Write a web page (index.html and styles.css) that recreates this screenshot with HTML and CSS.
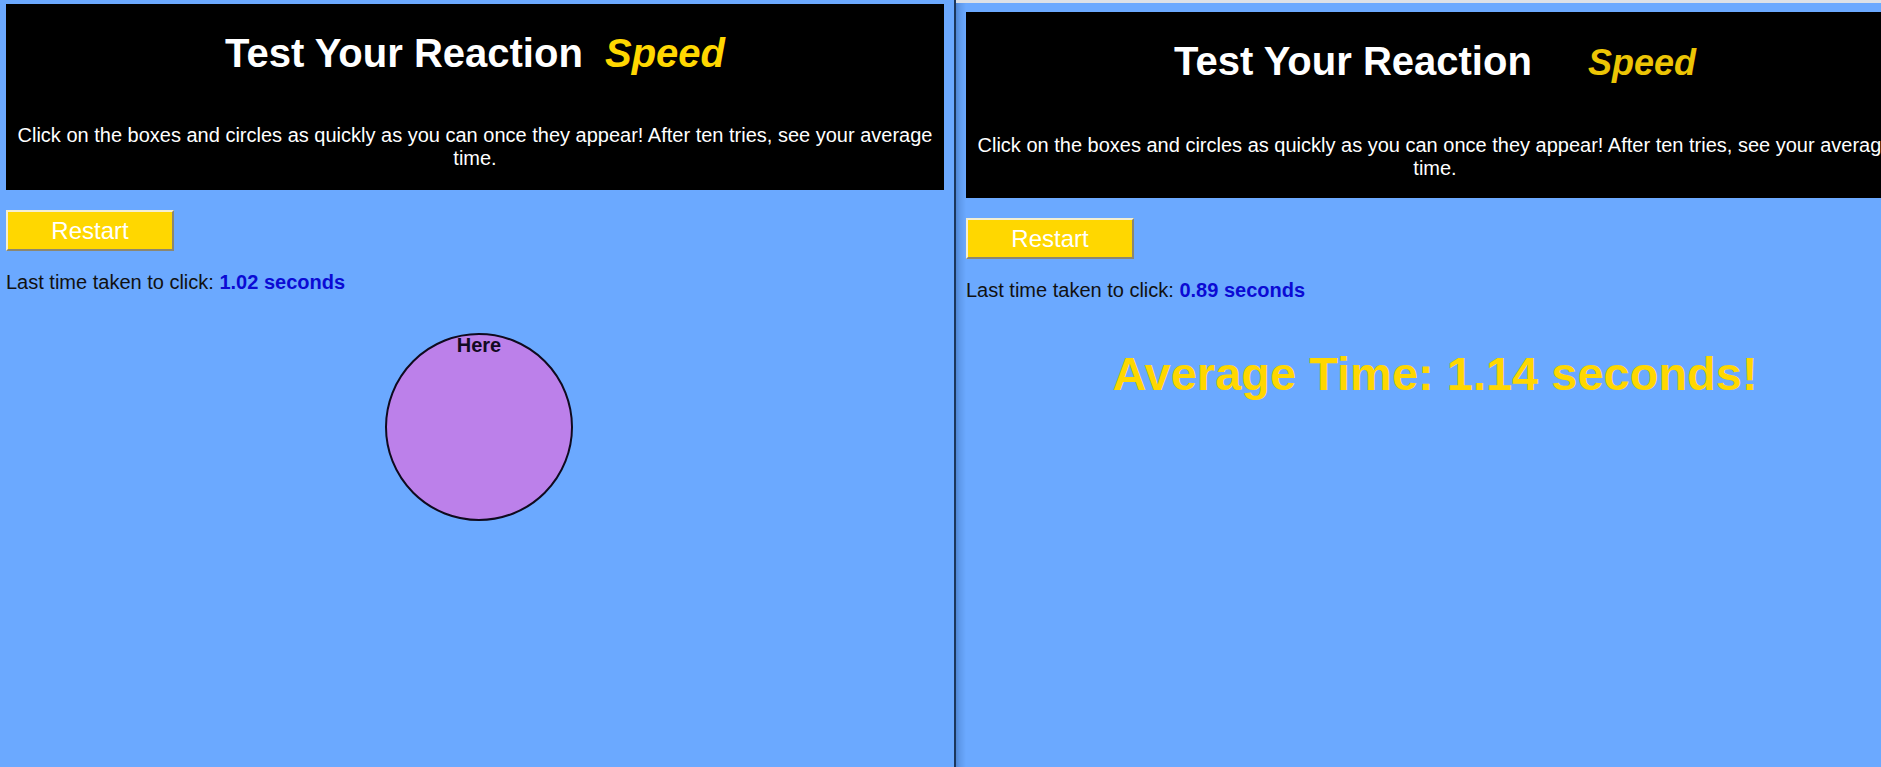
FILE: index.html
```html
<!DOCTYPE html>
<html lang="en">
<head>
<meta charset="utf-8">
<title>Test Your Reaction Speed</title>
<link rel="stylesheet" href="styles.css">
</head>
<body>
<div class="screens">
  <section class="pane pane-left">
    <div class="page">
      <header class="header">
        <h1 class="title">Test Your Reaction <span class="speed speed-near">Speed</span></h1>
        <p class="intro">Click on the boxes and circles as quickly as you can once they appear! After ten tries, see your average time.</p>
      </header>
      <button class="restart" type="button">Restart</button>
      <p class="last">Last time taken to click: <span class="last-value">1.02 seconds</span></p>
      <div class="game">
        <div class="target target-circle" style="left:379px; top:19px;">Here</div>
      </div>
    </div>
  </section>
  <div class="divider"></div>
  <section class="pane pane-right">
    <div class="page">
      <header class="header">
        <h1 class="title">Test Your Reaction <span class="speed speed-far">Speed</span></h1>
        <p class="intro">Click on the boxes and circles as quickly as you can once they appear! After ten tries, see your average time.</p>
      </header>
      <button class="restart" type="button">Restart</button>
      <p class="last">Last time taken to click: <span class="last-value">0.89 seconds</span></p>
      <div class="game">
        <h2 class="average">Average Time: 1.14 seconds!</h2>
      </div>
    </div>
  </section>
</div>
</body>
</html>
```

FILE: styles.css
```css
html, body {
  margin: 0;
  padding: 0;
  height: 100%;
}

body {
  background: #6ba9ff;
  font-family: "Liberation Sans", Arial, sans-serif;
  color: #111;
  overflow: hidden;
}

.screens {
  display: flex;
  height: 767px;
  width: 1881px;
  overflow: hidden;
}

.pane {
  box-sizing: border-box;
  overflow: hidden;
}

.pane-left {
  width: 954px;
  flex-shrink: 0;
  padding: 4px 10px 0 6px;
}

.divider {
  width: 2px;
  flex-shrink: 0;
  background: #1b365c;
}

.pane-right {
  flex: 1;
  min-width: 0;
  padding: 9px 0 0 10px;
  border-top: 3px solid #dde1e7;
  background: linear-gradient(to right, #4f86d4 0, #5f9aec 4px, #6ba9ff 10px);
}

.page {
  width: 938px;
}

.header {
  box-sizing: border-box;
  height: 186px;
  background: #000;
  color: #fff;
  text-align: center;
  padding: 26px 8px 0;
}

.title {
  margin: 0;
  font-size: 40px;
  line-height: 46px;
  font-weight: bold;
}

.speed {
  color: #ffd700;
  font-style: italic;
}

.speed-near {
  margin-left: 11px;
}

.speed-far {
  margin-left: 45px;
  font-size: 36px;
  color: #ecc505;
}

.intro {
  margin: 48px 0 0;
  font-size: 20px;
  line-height: 23px;
}

.restart {
  display: block;
  box-sizing: border-box;
  margin: 20px 0 0;
  width: 168px;
  height: 41px;
  padding: 0;
  background: #ffd700;
  color: #fff;
  font-family: "Liberation Sans", Arial, sans-serif;
  font-size: 24px;
  border: 2px solid;
  border-color: #f4efd2 #8c8770 #8c8770 #f4efd2;
}

.last {
  margin: 20px 0;
  font-size: 20px;
  line-height: 23px;
}

.last-value {
  color: #0b0bd4;
  font-weight: bold;
}

.game {
  position: relative;
  height: 450px;
}

.target {
  position: absolute;
  box-sizing: border-box;
  text-align: center;
  font-weight: bold;
  font-size: 20px;
  line-height: 20px;
  color: #120a22;
}

.target-circle {
  width: 188px;
  height: 188px;
  border: 2px solid #0f0a1e;
  border-radius: 50%;
  background: #bc80ea;
}

.average {
  margin: 45px 0 0;
  text-align: center;
  color: #ffd700;
  font-size: 47px;
  line-height: 54px;
  font-weight: bold;
}
```
